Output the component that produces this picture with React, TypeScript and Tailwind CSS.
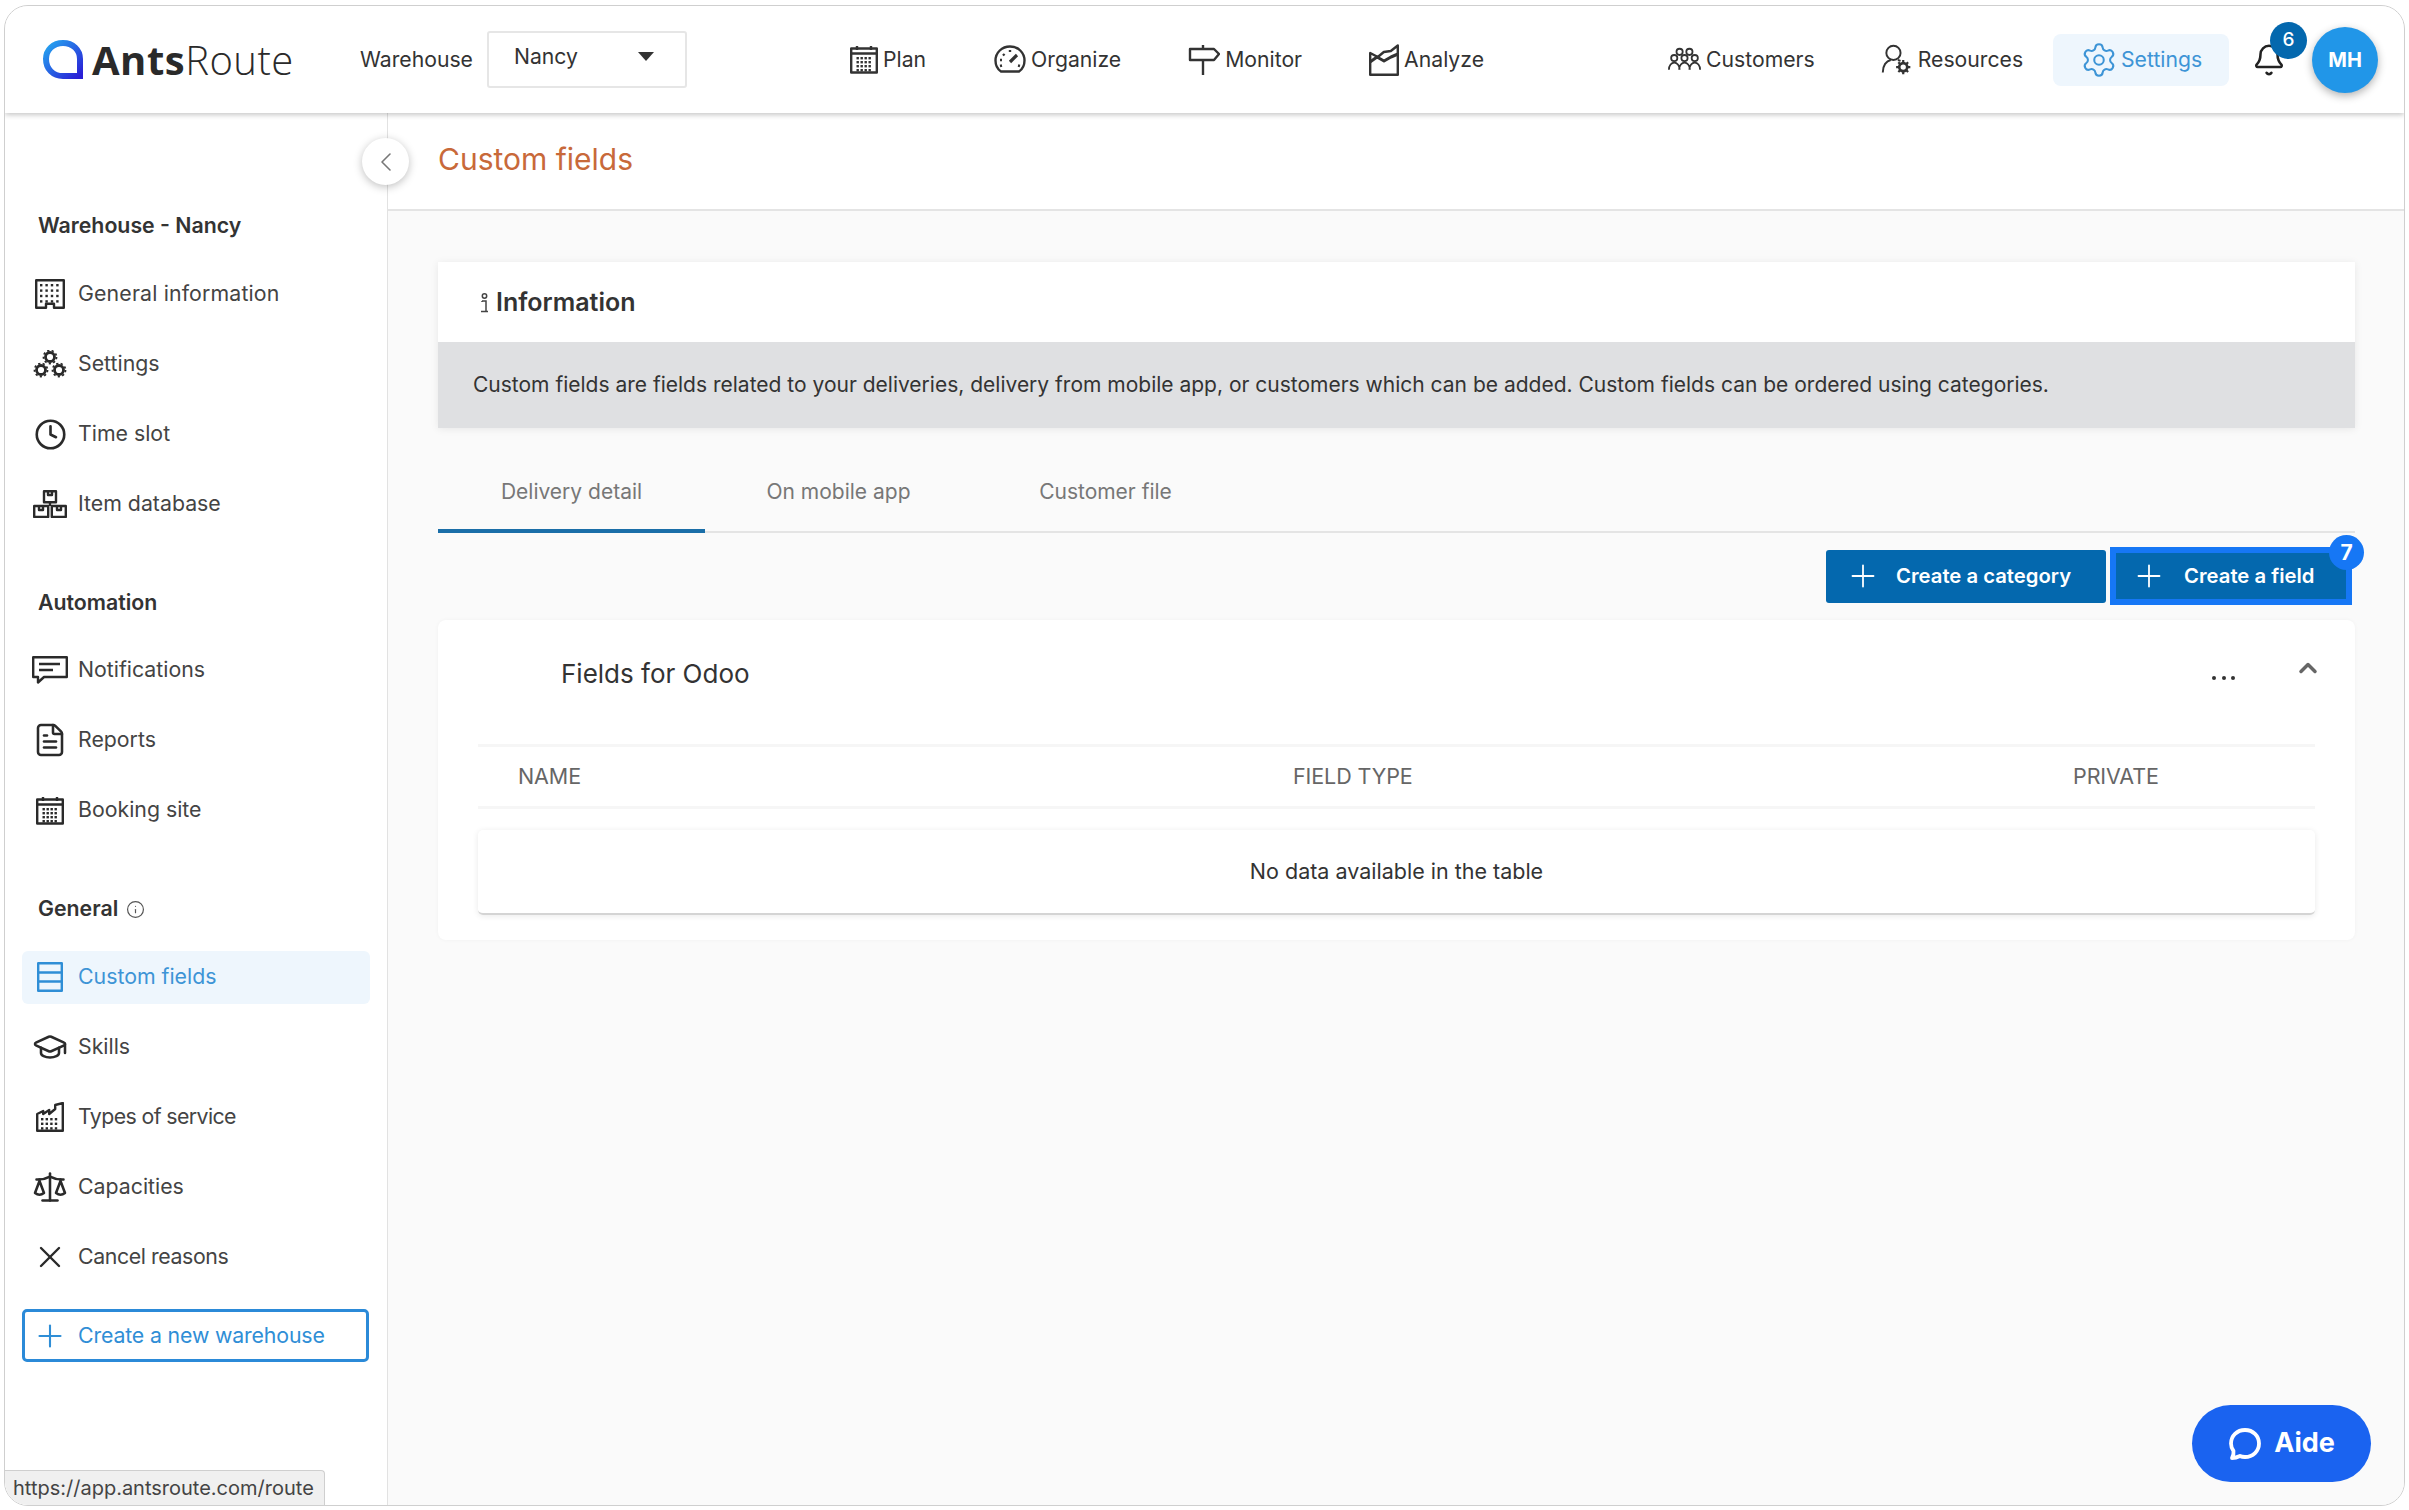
import type { ReactNode } from 'react'
import { Bell, ChevronLeft, ChevronUp, Clock, FileText, GraduationCap, Info, Plus, Scale, Settings, X } from 'lucide-react'

const sans = 'font-["Inter","Liberation_Sans",sans-serif]'

function Svg({ w = 32, h = 32, box = '0 0 32 32', sw = 2, children }: { w?: number; h?: number; box?: string; sw?: number; children: ReactNode }) {
  return (
    <svg width={w} height={h} viewBox={box} fill="none" stroke="currentColor" strokeWidth={sw} strokeLinejoin="round">
      {children}
    </svg>
  )
}

const Dots = ({ x, y, cols, rows, step }: { x: number; y: number; cols: number; rows: number; step: number }) => (
  <>
    {Array.from({ length: cols * rows }).map((_, i) => (
      <rect key={i} x={x + (i % cols) * step} y={y + Math.floor(i / cols) * step} width="2.4" height="2.4" fill="currentColor" stroke="none" />
    ))}
  </>
)

const CalendarIcon = () => (
  <Svg w={28} h={29} box="0 0 28 29" sw={2.4}>
    <rect x="1.2" y="3.5" width="25.6" height="24" />
    <path d="M1 8.5h26M7 1v4M21 1v4" />
    <Dots x={6.5} y={12} cols={4} rows={4} step={4} />
  </Svg>
)

const GaugeIcon = () => (
  <Svg w={32} h={28} box="0 0 32 28" sw={2.4}>
    <path d="M7 26.500c-3-2-5.500-6-5.500-11C1.500 7.500 8 1.500 16 1.500S30.500 7.500 30.500 15.500c0 5-2.500 9-5.500 11z" />
    <path d="M16 17l7-7" strokeWidth="3.200" />
    <path d="M6 15h2M9 9l1.500 1.500M16 5v2M6 21l2-.5M26 21l-2-.5" />
  </Svg>
)

const SignIcon = () => (
  <Svg w={32} h={32} sw={2.4}>
    <path d="M2 5h24l5 5-5 6H2z" />
    <path d="M15 1v4M15 16v15" />
  </Svg>
)

const ChartIcon = () => (
  <Svg w={30} h={32} box="0 0 30 32" sw={2.4}>
    <path d="M1.200 9v21.800h27.600V1.500l-7 5.500-7 1-6 5z" />
    <path d="M1 18l7-5 7 4 7-4 7-3" strokeWidth="3" />
  </Svg>
)

const PeopleIcon = () => (
  <Svg w={33} h={24} box="0 0 37 26" sw={2}>
    <circle cx="13" cy="5" r="3.500" />
    <circle cx="24" cy="5" r="3.500" />
    <circle cx="7" cy="12" r="3.500" />
    <circle cx="18.500" cy="12" r="3.500" />
    <circle cx="30" cy="12" r="3.500" />
    <path d="M1 25c0-5 3-8 6-8s6 3 6 8M12.500 25c0-5 3-8 6-8s6 3 6 8M24 25c0-5 3-8 6-8s6 3 6 8" />
  </Svg>
)

const ResourceIcon = () => (
  <svg width="32" height="34" viewBox="0 0 36 36" fill="none" stroke="currentColor" strokeWidth="2.2">
    <circle cx="14" cy="10" r="8" />
    <path d="M2 32c0-8 4-13 9-14M19 18l3 1" />
    <circle cx="25" cy="26" r="4.500" strokeWidth="3" />
    <path d="M25 18v3M25 31v3M17 26h3M30 26h3M19.500 20.500l2 2M28.500 29.500l2 2M19.500 31.500l2-2M28.500 22.500l2-2" strokeWidth="2.500" />
  </svg>
)

const BuildingIcon = () => (
  <Svg w={30} h={30} box="0 0 30 30" sw={2.4}>
    <path d="M1.200 1.200h27.600v27.600H19v-4h-8v4H1.200z" />
    <Dots x={5} y={5} cols={4} rows={4} step={5.400} />
  </Svg>
)

const GearsIcon = () => {
  const gear = (x: number, y: number) => (
    <g key={`${x}-${y}`}>
      <circle cx={x} cy={y} r="4.500" strokeWidth="2.800" />
      <circle cx={x} cy={y} r="6.500" strokeWidth="1.800" strokeDasharray="2.200 2.300" />
    </g>
  )
  return (
    <Svg w={34} h={28} box="0 0 34 28">
      {gear(17, 7)}
      {gear(8, 20)}
      {gear(26, 20)}
    </Svg>
  )
}

const BoxesIcon = () => (
  <Svg w={34} h={28} box="0 0 34 28" sw={2.4}>
    <rect x="11" y="1.200" width="12" height="11" />
    <rect x="1.200" y="16" width="14" height="11" />
    <rect x="18.800" y="16" width="14" height="11" />
    <path d="M15 1v4h4V1M6 16v4h4v-4M24 16v4h4v-4M17 12v4" />
  </Svg>
)

const MessageIcon = () => (
  <Svg w={36} h={28} box="0 0 36 28" sw={2.4}>
    <path d="M1.200 1.200h33.600v19.800H12l-6 5.500V21H1.200z" />
    <path d="M7 8h21M7 14h14" />
  </Svg>
)

const RowsIcon = () => (
  <Svg w={26} h={30} box="0 0 26 30" sw={2.4}>
    <rect x="1.200" y="1.200" width="23.600" height="27.600" />
    <path d="M1 10.500h24M1 19.500h24" />
  </Svg>
)

const FactoryIcon = () => (
  <Svg w={28} h={30} box="0 0 28 30" sw={2.4}>
    <path d="M1.200 28.800V12l6-3v3l6-4v4l6-5V3l7.600-2v27.800z" />
    <Dots x={5} y={16} cols={4} rows={3} step={4.600} />
  </Svg>
)

const InfoSmall = () => <Info className="w-[19px] h-[19px] text-[#555]" strokeWidth={1.500} />

function Logo() {
  return (
    <div className="flex items-center w-[258px]">
      <svg width="42" height="40" viewBox="0 0 42 40" fill="none">
        <defs>
          <linearGradient id="logo" x1="0" y1="0" x2="1" y2="1">
            <stop offset="0" stopColor="#25a7f0" />
            <stop offset="1" stopColor="#2a1fd6" />
          </linearGradient>
        </defs>
        <path d="M21 3C11 3 4 10 4 19c0 10 7 17 17 17h17V19C38 10 31 3 21 3z" stroke="url(#logo)" strokeWidth="6" />
      </svg>
      <span className="ml-[8px] text-[40px] leading-none font-['Open_Sans',sans-serif] text-[#2a2a2a] tracking-[0.5px]">
        <span className="font-bold">Ants</span>
        <span className="font-light">Route</span>
      </span>
    </div>
  )
}

function NavItem({ icon, label, className = '' }: { icon: ReactNode; label: string; className?: string }) {
  return (
    <div className={`flex items-center gap-[5px] text-[21.2px] text-[#333] ${className}`}>
      {icon}
      <span>{label}</span>
    </div>
  )
}

function Header() {
  return (
    <header className="relative z-20 h-[107px] shrink-0 bg-white flex items-center pl-[37px] shadow-[0_2px_5px_rgba(0,0,0,0.22)]">
      <Logo />
      <span className="ml-[60px] text-[21.2px] text-[#333]">Warehouse</span>
      <div className="ml-[14px] w-[200px] h-[57px] border-2 border-[#e6e6e6] rounded-[3px] flex items-center justify-between pl-[25px] pr-[31px] text-[21.2px] text-[#333]">
        <span className="-mt-[6px]">Nancy</span>
        <span className="-mt-[6px] w-0 h-0 border-x-[8px] border-x-transparent border-t-[9px] border-t-[#333]" />
      </div>
      <NavItem className="ml-[163px]" icon={<CalendarIcon />} label="Plan" />
      <NavItem className="ml-[68px]" icon={<GaugeIcon />} label="Organize" />
      <NavItem className="ml-[67px]" icon={<SignIcon />} label="Monitor" />
      <NavItem className="ml-[67px]" icon={<ChartIcon />} label="Analyze" />
      <NavItem className="ml-[184px]" icon={<PeopleIcon />} label="Customers" />
      <NavItem className="ml-[66px]" icon={<ResourceIcon />} label="Resources" />
      <div className="ml-[30px] w-[176px] h-[52px] rounded-[8px] bg-[#eef6fd] flex items-center justify-center gap-[3px] text-[21.2px] text-[#3d94d6]">
        <Settings className="w-[38px] h-[38px]" strokeWidth={1.300} />
        <span>Settings</span>
      </div>
      <div className="relative ml-[23px]">
        <Bell className="w-[34px] h-[36px] text-[#222]" strokeWidth={1.800} />
        <span className="absolute -top-[20px] left-[18px] w-[37px] h-[37px] rounded-full bg-[#0468ae] text-white text-[19px] font-medium flex items-center justify-center">6</span>
      </div>
      <div className="ml-[26px] w-[66px] h-[66px] rounded-full bg-[#2196e8] text-white text-[20px] font-bold flex items-center justify-center shadow-[0_3px_8px_rgba(0,0,0,0.3)]">MH</div>
    </header>
  )
}

function SideItem({ icon, label, active = false, labelClass = '' }: { icon: ReactNode; label: string; active?: boolean; labelClass?: string }) {
  return (
    <div className="h-[70px] mx-[17px] flex items-center">
      <div className={`w-full h-[53px] rounded-[6px] flex items-center gap-[10px] pl-[10px] text-[21.3px] ${active ? 'bg-[#eef6fd] text-[#3d94d6]' : 'text-[#444]'}`}>
        <span className={`w-[36px] flex justify-center ${active ? 'text-[#2f8ed6]' : 'text-[#2a2a2a]'}`}>{icon}</span>
        <span className={labelClass}>{label}</span>
      </div>
    </div>
  )
}

function SideHeading({ children, className = '' }: { children: ReactNode; className?: string }) {
  return <div className={`h-[32px] pl-[33px] flex items-center gap-[8px] text-[21.3px] font-semibold text-[#333] ${className}`}>{children}</div>
}

function Sidebar() {
  return (
    <aside className="w-[383px] shrink-0 bg-white border-r border-[#e2e2e2] pt-[97px]">
      <SideHeading>Warehouse - Nancy</SideHeading>
      <div className="mt-[17px]">
        <SideItem icon={<BuildingIcon />} label="General information" labelClass="tracking-[0.15px]" />
        <SideItem icon={<GearsIcon />} label="Settings" />
        <SideItem icon={<Clock className="w-[33px] h-[33px]" strokeWidth={1.900} />} label="Time slot" />
        <SideItem icon={<BoxesIcon />} label="Item database" />
      </div>
      <SideHeading className="mt-[48px]">Automation</SideHeading>
      <div className="mt-[16px]">
        <SideItem icon={<MessageIcon />} label="Notifications" />
        <SideItem icon={<FileText className="w-[36px] h-[36px]" strokeWidth={1.700} />} label="Reports" />
        <SideItem icon={<CalendarIcon />} label="Booking site" />
      </div>
      <SideHeading className="mt-[48px]">
        General <InfoSmall />
      </SideHeading>
      <div className="mt-[17px]">
        <SideItem active icon={<RowsIcon />} label="Custom fields" />
        <SideItem icon={<GraduationCap className="w-[38px] h-[38px]" strokeWidth={1.700} />} label="Skills" />
        <SideItem icon={<FactoryIcon />} label="Types of service" labelClass="tracking-[-0.6px]" />
        <SideItem icon={<Scale className="w-[36px] h-[36px]" strokeWidth={1.700} />} label="Capacities" />
        <SideItem icon={<X className="w-[38px] h-[38px]" strokeWidth={1.600} />} label="Cancel reasons" labelClass="tracking-[-0.4px]" />
      </div>
      <button className="mt-[17px] ml-[17px] w-[347px] h-[53px] rounded-[5px] border-[3px] border-[#2b8ad8] flex items-center gap-[10px] pl-[7px] text-[21.3px] tracking-[-0.15px] text-[#2f8ed6]">
        <span className="w-[36px] flex justify-center"><Plus className="w-[38px] h-[38px]" strokeWidth={1.400} /></span>
        Create a new warehouse
      </button>
    </aside>
  )
}

const tabs = ['Delivery detail', 'On mobile app', 'Customer file']

function Content() {
  return (
    <div className="flex-1 bg-[#fafafa] pl-[50px] pr-[49px] pt-[51px]">
      <section className="shadow-[0_1px_8px_rgba(0,0,0,0.08)]">
        <div className="h-[80px] bg-white pl-[42px] pt-[2px] flex items-center gap-[7px] text-[25px] font-semibold text-[#333]">
          <svg width="9" height="20" viewBox="0 0 9 20" fill="none" stroke="#444" strokeWidth="1.500">
            <circle cx="4.500" cy="3" r="2.200" />
            <path d="M2 8h4v10M1 18.500h7M2 8v1" />
          </svg>
          Information
        </div>
        <div className="h-[86px] bg-[#dfe0e2] pl-[35px] flex items-center text-[21px] text-[#333]">
          Custom fields are fields related to your deliveries, delivery from mobile app, or customers which can be added. Custom fields can be ordered using categories.
        </div>
      </section>

      <nav className="mt-[24px] flex h-[81px] border-b-2 border-[#e4e4e4]">
        {tabs.map((t, i) => (
          <div key={t} className={`w-[267px] -mb-[2px] pt-[3px] border-b-[4px] flex items-center justify-center text-[21px] text-[#777] ${i === 0 ? 'border-[#1a6ea8]' : 'border-transparent'}`}>
            {t}
          </div>
        ))}
      </nav>

      <div className="mt-[14px] pr-[3px] flex justify-end items-center gap-[4px]">
        <button className="w-[280px] h-[53px] rounded-[3px] bg-[#0468ae] text-white text-[20.3px] font-semibold flex items-center gap-[15px] pl-[19px]">
          <Plus className="w-[36px] h-[36px]" strokeWidth={1.200} />
          Create a category
        </button>
        <div className="relative">
          <button className="w-[242px] h-[58px] bg-[#0468ae] border-[6px] border-[#1677f5] text-white text-[20.3px] font-semibold flex items-center gap-[17px] pl-[15px]">
            <Plus className="w-[36px] h-[36px]" strokeWidth={1.200} />
            Create a field
          </button>
          <span className="absolute -top-[12px] -right-[12px] w-[35px] h-[35px] rounded-full bg-[#1677f5] text-white text-[21px] font-bold flex items-center justify-center">7</span>
        </div>
      </div>

      <section className="mt-[15px] h-[320px] bg-white rounded-[8px] px-[40px] shadow-[0_0_4px_rgba(0,0,0,0.04)]">
        <div className="h-[124px] pt-[37px] pl-[83px] flex items-start text-[26px] text-[#333]">
          <span className="flex-1 leading-[34px]">Fields for Odoo</span>
          <span className="mt-[19px] flex gap-[5.500px]">
            <i className="w-[4px] h-[4px] rounded-full bg-[#333]" />
            <i className="w-[4px] h-[4px] rounded-full bg-[#333]" />
            <i className="w-[4px] h-[4px] rounded-full bg-[#333]" />
          </span>
          <ChevronUp className="ml-[59px] -mr-[7px] -mt-[3px] w-[28px] h-[28px] text-[#666]" strokeWidth={3} />
        </div>
        <div className="h-[65px] border-y-[3px] border-[#f6f6f6] grid grid-cols-[775px_780px_1fr] items-center pl-[40px] text-[21.5px] tracking-[-0.1px] text-[#666]">
          <span>NAME</span>
          <span>FIELD TYPE</span>
          <span>PRIVATE</span>
        </div>
        <div className="mt-[21px] h-[85px] bg-white rounded-[5px] flex items-center justify-center text-[21.5px] text-[#333] border-b-2 border-[#d4d4d4] shadow-[0_1px_6px_rgba(0,0,0,0.09)]">
          No data available in the table
        </div>
      </section>
    </div>
  )
}

export default function App() {
  return (
    <div className={`w-[2409px] h-[1510px] bg-white pt-[5px] pb-[4px] pl-[4px] pr-[4px] ${sans}`}>
      <div className="relative h-full flex flex-col overflow-hidden rounded-[24px] border border-[#cfcfcf]">
        <Header />
        <div className="flex flex-1 min-h-0">
          <Sidebar />
          <main className="flex-1 flex flex-col min-w-0">
            <div className="h-[98px] shrink-0 bg-white border-b-2 border-[#e4e4e4] pl-[50px] pb-[3px] flex items-center text-[30px] text-[#c8693a]">Custom fields</div>
            <Content />
          </main>
        </div>

        <button className="absolute left-[357px] top-[132px] z-30 w-[47px] h-[47px] rounded-full bg-white flex items-center justify-center text-[#777] shadow-[0_2px_8px_rgba(0,0,0,0.25)]">
          <ChevronLeft className="w-[32px] h-[32px]" strokeWidth={1.200} />
        </button>

        <div className="absolute left-0 bottom-0 z-30 w-[320px] h-[35px] pl-[8px] flex items-center bg-[#f0f0f0] border-t border-r border-[#cfcfcf] rounded-tr-[4px] text-[20px] text-[#444]">
          https://app.antsroute.com/route
        </div>

        <button className="absolute left-[2187px] top-[1399px] z-30 w-[179px] h-[77px] rounded-full bg-[#1a63f0] text-white text-[27px] font-bold flex items-center justify-center gap-[12px]">
          <svg width="34" height="34" viewBox="0 0 34 34" fill="none" stroke="white" strokeWidth="3.800" strokeLinecap="round" strokeLinejoin="round">
            <path d="M17 3c8 0 14 6 14 13.500S25 30 17 30c-2 0-4-.5-5-1-2 1-5 2-8 2 1-2 2-4 1.500-7C4 22 3 19.500 3 16.500 3 9 9 3 17 3z" />
          </svg>
          Aide
        </button>
      </div>
    </div>
  )
}
